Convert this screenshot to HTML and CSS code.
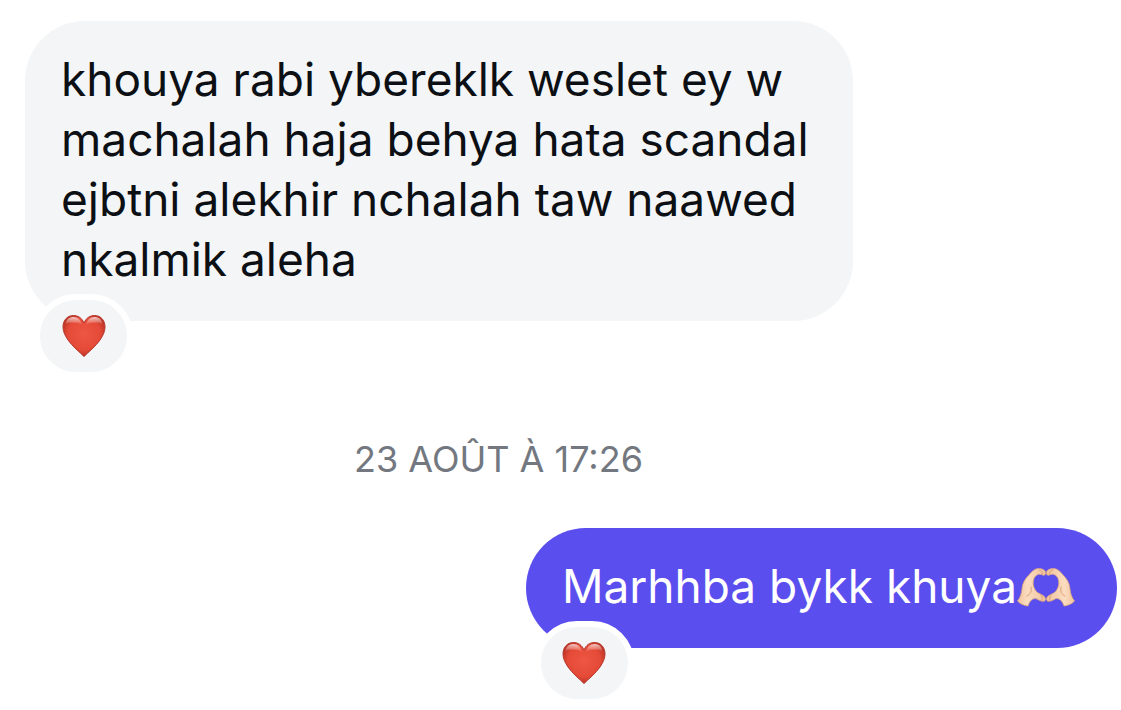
FILE: index.html
```html
<!DOCTYPE html>
<html lang="fr">
<head>
<meta charset="utf-8">
<meta name="viewport" content="width=device-width, initial-scale=1">
<title>Conversation</title>
<link rel="stylesheet" href="styles.css">
</head>
<body>
<svg class="defs" aria-hidden="true">
  <defs>
    <radialGradient id="heart-fill" cx="0.5" cy="0.45" r="0.6">
      <stop offset="0" stop-color="#ee5743"/>
      <stop offset="0.65" stop-color="#e44a37"/>
      <stop offset="1" stop-color="#b02c1f"/>
    </radialGradient>
    <linearGradient id="heart-shine" x1="0" y1="0" x2="0" y2="1">
      <stop offset="0" stop-color="#fff" stop-opacity="0.7"/>
      <stop offset="1" stop-color="#fff" stop-opacity="0"/>
    </linearGradient>
    <linearGradient id="skin" x1="0" y1="0" x2="1" y2="0">
      <stop offset="0" stop-color="#f0c49e"/>
      <stop offset="0.35" stop-color="#fbdcc0"/>
      <stop offset="1" stop-color="#f0c39d"/>
    </linearGradient>
    <symbol id="heart" viewBox="0 0 44 44">
      <path d="M22 42.500C18 38.500 10 32 6 26C3 21.500 1 17.500 1 13C1 6 5.500 1.500 11.500 1.500C16 1.500 20 4 22 9C24 4 28 1.500 32.500 1.500C38.500 1.500 43 6 43 13C43 17.500 41 21.500 38 26C34 32 26 38.500 22 42.500Z" fill="url(#heart-fill)" stroke="#b5372b" stroke-width="1"/>
      <path d="M3.500 10C4 5.500 7.500 3 11.500 3C16 3 19 6 20 11C15 8 9 8 3.500 10Z" fill="url(#heart-shine)"/>
      <path d="M40.500 10C40 5.500 36.500 3 32.500 3C28 3 25 6 24 11C29 8 35 8 40.500 10Z" fill="url(#heart-shine)"/>
    </symbol>
    <symbol id="hand" viewBox="0 0 29 40">
      <path d="M0.500 34C3 31 4.500 27 5 22C5.500 16 8 12 12 8C14.500 4.500 18 1.500 21.500 1.500C25 1.500 28 3 28.500 5C29 7.500 27.500 9 25.500 8C22 6 18.500 8 17 11.500C15.500 15.500 16 20 19 24C21.500 27.500 28.500 27.500 28.500 32.500C28 35.500 24 34.500 20 32C16 30.500 13 33.500 11 39C7 38.500 3 37 0.500 34Z" fill="url(#skin)" stroke="#d9a47c" stroke-width="0.800"/>
      <path d="M10 29C13.500 27.500 15 24 14 20M22 3C24 3 25.500 4.500 25.500 7M24 28.500C25.500 30 25.500 32 25 33.500" fill="none" stroke="#d49a70" stroke-width="0.900" stroke-linecap="round"/>
    </symbol>
  </defs>
</svg>
<main class="chat">
  <article class="message message-in">
    <p class="text">khouya rabi ybereklk weslet ey w machalah haja behya hata scandal ejbtni alekhir nchalah taw naawed nkalmik aleha</p>
    <button class="reaction" type="button" aria-label="Réaction cœur"><svg class="heart"><use href="#heart"/></svg></button>
  </article>
  <time class="stamp">23 AOÛT À 17:26</time>
  <article class="message message-out">
    <p class="text">Marhhba bykk khuya<svg class="hands" viewBox="0 0 58 40" role="img" aria-label="Mains en cœur"><use href="#hand" width="29" height="40"/><use href="#hand" width="29" height="40" transform="translate(58 0) scale(-1 1)"/></svg></p>
    <button class="reaction" type="button" aria-label="Réaction cœur"><svg class="heart"><use href="#heart"/></svg></button>
  </article>
</main>
</body>
</html>
```
FILE: styles.css
```css
* {
  box-sizing: border-box;
}

body {
  margin: 0;
  background: #fff;
  font-family: Inter, "Liberation Sans", sans-serif;
}

.defs {
  position: absolute;
  width: 0;
  height: 0;
}

.chat {
  display: flex;
  flex-direction: column;
  padding: 21px 4px 62px 25px;
}

.message {
  position: relative;
  border-radius: 60px;
  padding: 28px 36px 32px;
}

.message-in {
  align-self: flex-start;
  max-width: 828px;
  background: #f3f5f7;
  color: #0c1014;
}

.message-out {
  align-self: flex-end;
  padding-right: 42px;
  background: #5b4eee;
  color: #fff;
}

.text {
  margin: 0;
  font-size: 46px;
  line-height: 60px;
}

.reaction {
  position: absolute;
  left: 9px;
  bottom: -57px;
  display: flex;
  align-items: center;
  justify-content: center;
  width: 99px;
  height: 84px;
  padding: 0;
  border: 6px solid #fff;
  border-radius: 42px;
  background: #f3f5f7;
}

.heart {
  width: 44px;
  height: 44px;
}

.stamp {
  margin: 114px 145px 45px 0;
  color: #737880;
  font-size: 36px;
  line-height: 48px;
  text-align: center;
}

.hands {
  width: 58px;
  height: 40px;
  vertical-align: -4px;
}
```
